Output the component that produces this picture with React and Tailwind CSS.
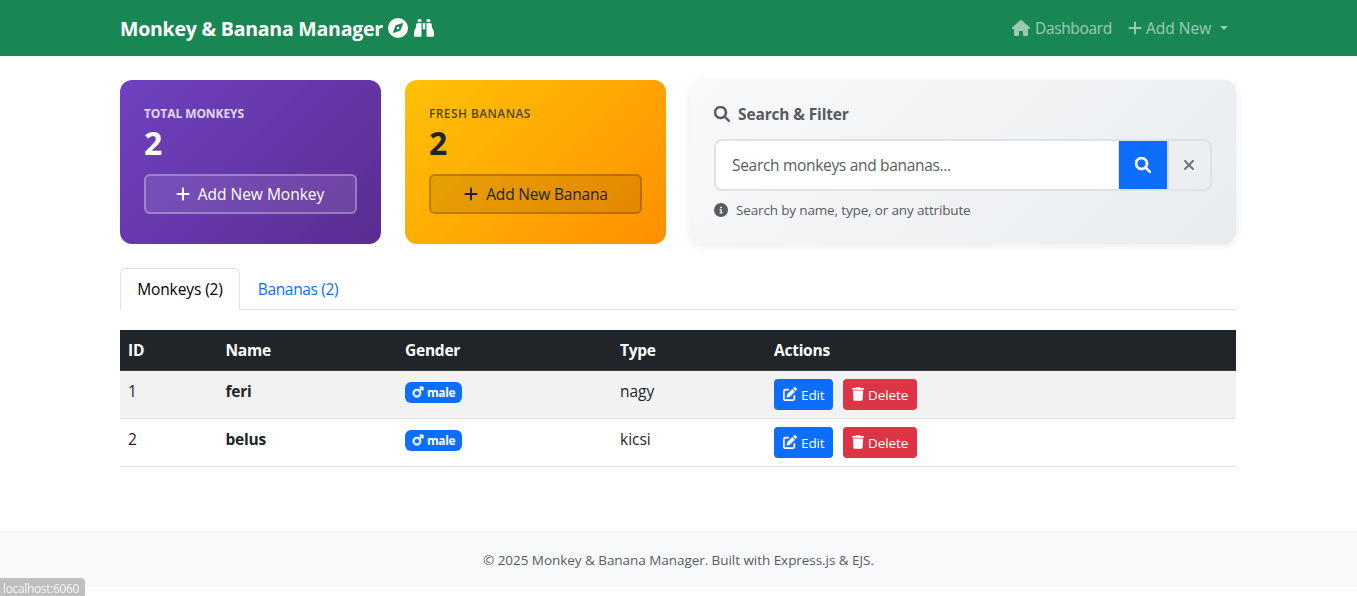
import React from 'react';
import {
  FaCompass, FaBinoculars, FaHouse, FaPlus, FaMagnifyingGlass, FaXmark,
  FaCircleInfo, FaMars, FaPenToSquare, FaTrash,
} from 'react-icons/fa6';

const monkeys = [
  { id: 1, name: 'feri', gender: 'male', type: 'nagy' },
  { id: 2, name: 'belus', gender: 'male', type: 'kicsi' },
];

function Navbar() {
  return (
    <nav className="h-14 bg-[#198754]">
      <div className="ml-[120px] flex h-full w-[1116px] items-center justify-between">
        <a className="flex items-center whitespace-nowrap text-[19.5px] font-bold tracking-[-0.22px] text-white">
          <span className="w-[268px] pt-[2px]">Monkey &amp; Banana Manager</span>
          <FaCompass className="size-5" />
          <FaBinoculars className="ml-[6px] size-5" />
        </a>
        <div className="flex items-center pr-2 text-[15.5px] tracking-[-0.2px] text-white/55">
          <a className="flex items-center">
            <FaHouse className="mr-[5px] h-4 w-[18px]" />
            <span className="w-[77px] pt-[2px] tracking-[-0.35px]">Dashboard</span>
          </a>
          <a className="ml-[15px] flex items-center">
            <FaPlus className="mr-[3px] size-4" />
            <span className="w-[66px] pt-[2px] tracking-[0px] whitespace-nowrap">Add New</span>
            <span className="ml-2 border-x-[4.5px] border-t-[4.5px] border-x-transparent border-t-white/55" />
          </a>
        </div>
      </div>
    </nav>
  );
}

function SearchPanel() {
  return (
    <section className="h-[164px] w-[546px] rounded-xl bg-linear-135 from-[#f8f9fa] to-[#e9ecef] px-6 pt-6 shadow-[0_2px_10px_rgba(0,0,0,0.08)]">
      <h2 className="flex h-[21px] items-center text-[15.5px] font-bold tracking-[-0.14px] text-[#56595d]">
        <FaMagnifyingGlass className="mr-2 mb-px size-4" strokeWidth="16" />
        Search &amp; Filter
      </h2>
      <div className="mt-[14px] flex h-[52px] overflow-hidden rounded-lg border-2 border-[#dee2e6]">
        <div className="flex w-[402px] items-center bg-white pt-[2px] pl-4 text-[15.5px] tracking-[-0.31px] text-[#595c5f]">
          Search monkeys and bananas...
        </div>
        <button className="flex w-[49px] items-center justify-center border-l border-[#dee2e6] bg-[#0d6efd] text-white">
          <FaMagnifyingGlass className="size-4" strokeWidth="24" />
        </button>
        <button className="flex flex-1 items-center justify-center border-l-2 border-[#dee2e6] pr-[2px] text-[#6c757d]">
          <FaXmark className="size-4" />
        </button>
      </div>
      <p className="mt-[9px] flex h-5 items-center text-[13.5px] tracking-[-0.15px] text-[#595c5f]">
        <FaCircleInfo className="mr-2 size-[14px]" />
        Search by name, type, or any attribute
      </p>
    </section>
  );
}

function MonkeyRow({ monkey, striped }) {
  return (
    <tr className={striped ? 'h-12 border-b border-[#dee2e6] bg-[#f2f2f2]' : 'h-12 border-b border-[#dee2e6]'}>
      <td className="px-2 pt-2 align-top">{monkey.id}</td>
      <td className="px-2 pt-2 align-top font-bold tracking-[-0.25px]">{monkey.name}</td>
      <td className="px-2 pt-[11px] align-top">
        <span className="flex h-[21px] w-[57px] items-center justify-center rounded-md bg-[#0d6efd] text-[12px] font-bold tracking-[-0.4px] text-white">
          <FaMars className="mr-[3px] size-3" strokeWidth="28" />
          <span className="pt-px">{monkey.gender}</span>
        </span>
      </td>
      <td className="px-2 pt-2 align-top">{monkey.type}</td>
      <td className="px-2 pt-2 align-top">
        <div className="flex gap-[10px] text-[13.5px] tracking-[-0.1px] text-white">
          <button className="flex h-[31px] w-[59px] items-center rounded bg-[#0d6efd] pl-[9px]">
            <FaPenToSquare className="mr-1 size-[14px]" />
            <span className="pt-[2px]">Edit</span>
          </button>
          <button className="flex h-[31px] w-[74px] items-center rounded bg-[#dc3545] pl-[9px]">
            <FaTrash className="mr-1 h-[14px] w-3" />
            <span className="pt-[2px]">Delete</span>
          </button>
        </div>
      </td>
    </tr>
  );
}

export default function App() {
  return (
    <div className="h-[596px] overflow-hidden bg-white font-['Open_Sans',sans-serif] text-[#212529]">
      <Navbar />
      <main className="ml-[120px] h-[475px] w-[1116px] pt-6">
        <div className="flex gap-6">
          <section className="h-[164px] w-[261px] rounded-xl bg-linear-135 from-[#6f42c1] to-[#5a2d91] px-6 pt-6 text-white">
            <h3 className="h-[19px] text-[12px] leading-[19px] font-bold tracking-[-0.08px] text-white/80">TOTAL MONKEYS</h3>
            <p className="h-[38px] text-[32px] leading-[40px] font-bold">2</p>
            <button className="mt-[13px] flex h-10 w-full items-center justify-center rounded-md border-2 border-white/30 bg-white/10 pr-[2px] text-[15.5px] text-white">
              <FaPlus className="mr-[7px] size-4" />
              <span className="pt-[2px]">Add New Monkey</span>
            </button>
          </section>
          <section className="h-[164px] w-[261px] rounded-xl bg-linear-135 from-[#ffc107] to-[#ff8f00] px-6 pt-6">
            <h3 className="h-[19px] text-[12px] leading-[19px] font-semibold tracking-[0.4px] text-[#212529]/80">FRESH BANANAS</h3>
            <p className="h-[38px] text-[32px] leading-[40px] font-bold">2</p>
            <button className="mt-[13px] flex h-10 w-full items-center justify-center rounded-md border-2 border-black/20 bg-black/10 text-[15.5px] tracking-[-0.18px]">
              <FaPlus className="mr-[7px] size-4" />
              <span className="pt-[2px]">Add New Banana</span>
            </button>
          </section>
          <SearchPanel />
        </div>
        <div className="mt-6 flex h-[42px] border-b border-[#dee2e6] text-[15.5px] tracking-[-0.1px]">
          <button className="-mb-px flex w-[120px] items-center justify-center rounded-t-md border border-b-0 border-[#dee2e6] bg-white text-black">
            Monkeys (2)
          </button>
          <button className="flex w-[116px] items-center justify-center pt-[2px] tracking-[-0.35px] text-[#0d6efd]">Bananas (2)</button>
        </div>
        <table className="mt-5 w-full table-fixed border-collapse text-[15.5px] leading-6">
          <colgroup>
            <col className="w-[97.5px]" />
            <col className="w-[179.5px]" />
            <col className="w-[215px]" />
            <col className="w-[154px]" />
            <col />
          </colgroup>
          <thead>
            <tr className="h-[40px] border-b border-[#373b3e] bg-[#212529] text-left tracking-[-0.25px] text-white">
              <th className="px-2 pt-px">ID</th>
              <th className="px-2 pt-px">Name</th>
              <th className="px-2 pt-px">Gender</th>
              <th className="px-2 pt-px">Type</th>
              <th className="px-2 pt-px">Actions</th>
            </tr>
          </thead>
          <tbody>
            {monkeys.map((monkey, i) => (
              <MonkeyRow key={monkey.id} monkey={monkey} striped={i % 2 === 0} />
            ))}
          </tbody>
        </table>
      </main>
      <footer className="flex h-14 items-center justify-center bg-[#f8f9fa] pt-[2px] text-[13.5px] tracking-[-0.05px] text-[#595c5f]">
        © 2025 Monkey &amp; Banana Manager. Built with Express.js &amp; EJS.
      </footer>
      <div className="fixed bottom-0 left-0 flex h-[18px] w-[85px] items-center rounded-tr bg-[#bfbfbf] pt-[3px] pl-[3px] text-[12px] tracking-[-0.35px] text-[#f4f4f4]">
        localhost:6060
      </div>
    </div>
  );
}
